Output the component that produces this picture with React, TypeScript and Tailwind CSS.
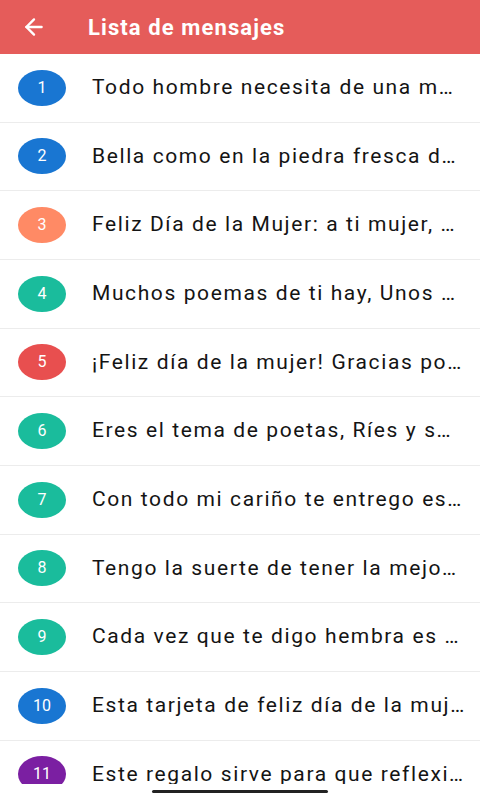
import React from 'react';
import { ArrowLeft } from 'lucide-react';

const mensajes = [
  { n: 1, color: 'bg-[#1976d2]', text: 'Todo hombre necesita de una m…' },
  { n: 2, color: 'bg-[#1976d2]', text: 'Bella como en la piedra fresca d…' },
  { n: 3, color: 'bg-[#ff8a65]', text: 'Feliz Día de la Mujer: a ti mujer, …' },
  { n: 4, color: 'bg-[#1abc9c]', text: 'Muchos poemas de ti hay, Unos …' },
  { n: 5, color: 'bg-[#e84f4f]', text: '¡Feliz día de la mujer! Gracias po…' },
  { n: 6, color: 'bg-[#1abc9c]', text: 'Eres el tema de poetas, Ríes y s…' },
  { n: 7, color: 'bg-[#1abc9c]', text: 'Con todo mi cariño te entrego es…' },
  { n: 8, color: 'bg-[#1abc9c]', text: 'Tengo la suerte de tener la mejo…' },
  { n: 9, color: 'bg-[#1abc9c]', text: 'Cada vez que te digo hembra es …' },
  { n: 10, color: 'bg-[#1976d2]', text: 'Esta tarjeta de feliz día de la muj…' },
  { n: 11, color: 'bg-[#7b1fa2]', text: 'Este regalo sirve para que reflexi…' },
];

export default function App() {
  return (
    <div className="w-[480px] h-[800px] bg-white flex flex-col overflow-hidden font-['Roboto',sans-serif]">
      <header className="h-[54px] shrink-0 bg-[#e55c5a] flex items-center text-white">
        <button className="w-[68px] h-full flex items-center pl-[21px]">
          <ArrowLeft size={26} strokeWidth={2.2} />
        </button>
        <h1 className="ml-[20px] text-[22px] font-bold tracking-[1.1px]">Lista de mensajes</h1>
      </header>

      <ul className="h-[730px] shrink-0 overflow-hidden">
        {mensajes.map((m) => (
          <li
            key={m.n}
            className="h-[68.67px] flex items-center border-b border-[#ececec] pl-[18px]"
          >
            <span
              className={`w-12 h-9 shrink-0 rounded-[50%] ${m.color} text-white text-[16px] flex items-center justify-center`}
            >
              {m.n}
            </span>
            <span className="ml-[26px] text-[21px] text-[#141414] whitespace-pre tracking-[1.6px]">
              {m.text}
            </span>
          </li>
        ))}
      </ul>

      <div className="flex-1 flex justify-center pt-[6px]">
        <div className="w-[176px] h-[3px] rounded-full bg-[#222]" />
      </div>
    </div>
  );
}
